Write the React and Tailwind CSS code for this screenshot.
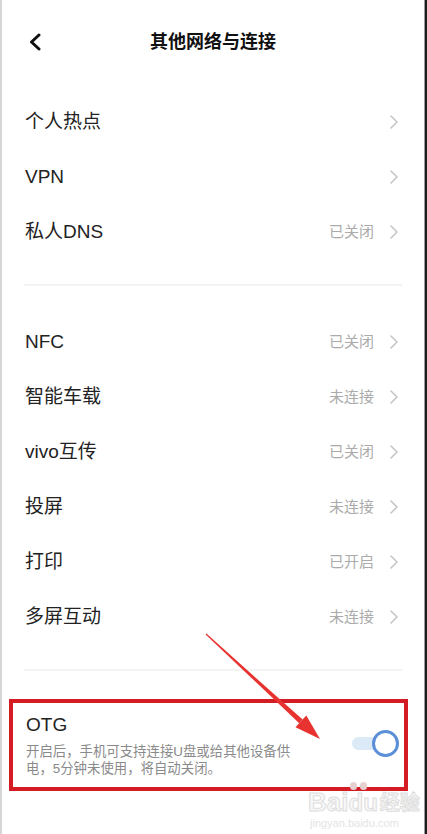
import React from 'react';

const groupOne = [
    { label: '个人热点' },
    { label: 'VPN' },
    { label: '私人DNS', value: '已关闭' },
];

const groupTwo = [
    { label: 'NFC', value: '已关闭' },
    { label: '智能车载', value: '未连接' },
    { label: 'vivo互传', value: '已关闭' },
    { label: '投屏', value: '未连接' },
    { label: '打印', value: '已开启' },
    { label: '多屏互动', value: '未连接' },
];

const font = "font-['Liberation_Sans','Noto_Sans_CJK_SC',sans-serif]";

const Chevron = () => (
    <svg width="10" height="14" viewBox="0 0 10 14" fill="none">
        <path d="M2 1 L8 7 L2 13" stroke="#c6c6c6" strokeWidth="1.6" strokeLinecap="round" strokeLinejoin="round" />
    </svg>
);

const Row = ({ label, value }) => (
    <div className="h-[55px] flex items-center justify-between pl-[23px] pr-[25px] pt-[3px]">
        <span className="text-[19px] text-[#222]">{label}</span>
        <div className="flex items-center gap-[15px]">
            {value && <span className="text-[15px] text-[#ababab]">{value}</span>}
            <Chevron />
        </div>
    </div>
);

const Divider = () => <div className="mx-[22px] h-[2px] bg-[#f3f3f3]" />;

const App = () => {
    return (
        <div className={`w-[427px] h-[834px] flex bg-white overflow-hidden relative ${font}`}>
            <div className="w-[2px] bg-[#d6d6d6]" />
            <div className="flex-1 flex flex-col">
                {/* Header */}
                <div className="h-[84px] grid grid-cols-[1fr_auto_1fr] items-center">
                    <div className="pl-[26px] flex items-center">
                        <svg width="14" height="18" viewBox="0 0 14 18" fill="none">
                            <path d="M11 2 L3.5 9 L11 16" stroke="#111" strokeWidth="3" strokeLinecap="round" strokeLinejoin="round" />
                        </svg>
                    </div>
                    <h1 className="text-[18px] font-bold text-[#111]">其他网络与连接</h1>
                    <div />
                </div>

                <div className="mt-[9px]">
                    {groupOne.map((r) => <Row key={r.label} {...r} />)}
                </div>
                <div className="mt-[26px]"><Divider /></div>

                <div className="mt-[27px]">
                    {groupTwo.map((r) => <Row key={r.label} {...r} />)}
                </div>
                <div className="mt-[26px]"><Divider /></div>

                {/* OTG */}
                <div className="mt-[28px] ml-[7px] w-[399px] border-4 border-[#d41c24] flex items-center pl-[13px] pr-[5px] pt-[10px] pb-[10px]">
                    <div className="flex-1">
                        <p className="text-[19px] leading-[24px] text-[#222]">OTG</p>
                        <p className="mt-[6px] text-[13.4px] leading-[17px] text-[#8a8a8a]">
                            开启后，手机可支持连接U盘或给其他设备供<br />电，5分钟未使用，将自动关闭。
                        </p>
                    </div>
                    <div className="relative w-[47px] h-[27px] -mt-[4px]">
                        <div className="absolute left-0 top-[7px] w-[34px] h-[13px] rounded-full bg-[#dce9f7]" />
                        <div className="absolute right-0 top-0 w-[27px] h-[27px] rounded-full border-[3px] border-[#5b8fd8] bg-white" />
                    </div>
                </div>
            </div>
            <div className="w-px bg-[#9a9a9a]" />
            <div className="w-[2px] bg-[#1e1e1e]" />

            {/* annotation arrow */}
            <svg className="absolute left-0 top-0 pointer-events-none" width="427" height="834">
                <polygon points="205.6,634.4 206.4,633.6 302.6,719.6 299.2,723.2" fill="#e8322f" />
                <polygon points="320,739 295.5,727.3 306.3,715.5" fill="#e8322f" />
            </svg>

            {/* watermark */}
            <div className="absolute left-[308px] top-[788px] flex flex-col items-start pointer-events-none">
                <div className="flex items-end">
                    <span className="text-[26px] leading-[28px] font-bold text-[#f7f7f7] [-webkit-text-stroke:1px_#dedede]">Bai</span>
                    <span className="relative text-[24px] leading-[26px] font-bold text-[#f7f7f7] [-webkit-text-stroke:1px_#dedede]">
                        du
                        <span className="absolute -top-[8px] left-[2px] w-[7px] h-[8px] rounded-full bg-[#e6d0d0]" />
                        <span className="absolute -top-[8px] left-[12px] w-[7px] h-[8px] rounded-full bg-[#e6d0d0]" />
                    </span>
                    <span className="ml-[2px] text-[20px] leading-[26px] font-bold text-[#f7f7f7] [-webkit-text-stroke:1px_#dedede]">经验</span>
                </div>
                <span className="ml-[2px] text-[11px] leading-[14px] text-[#e4e4e4]">jingyan.baidu.com</span>
            </div>
        </div>
    );
};

export default App;
